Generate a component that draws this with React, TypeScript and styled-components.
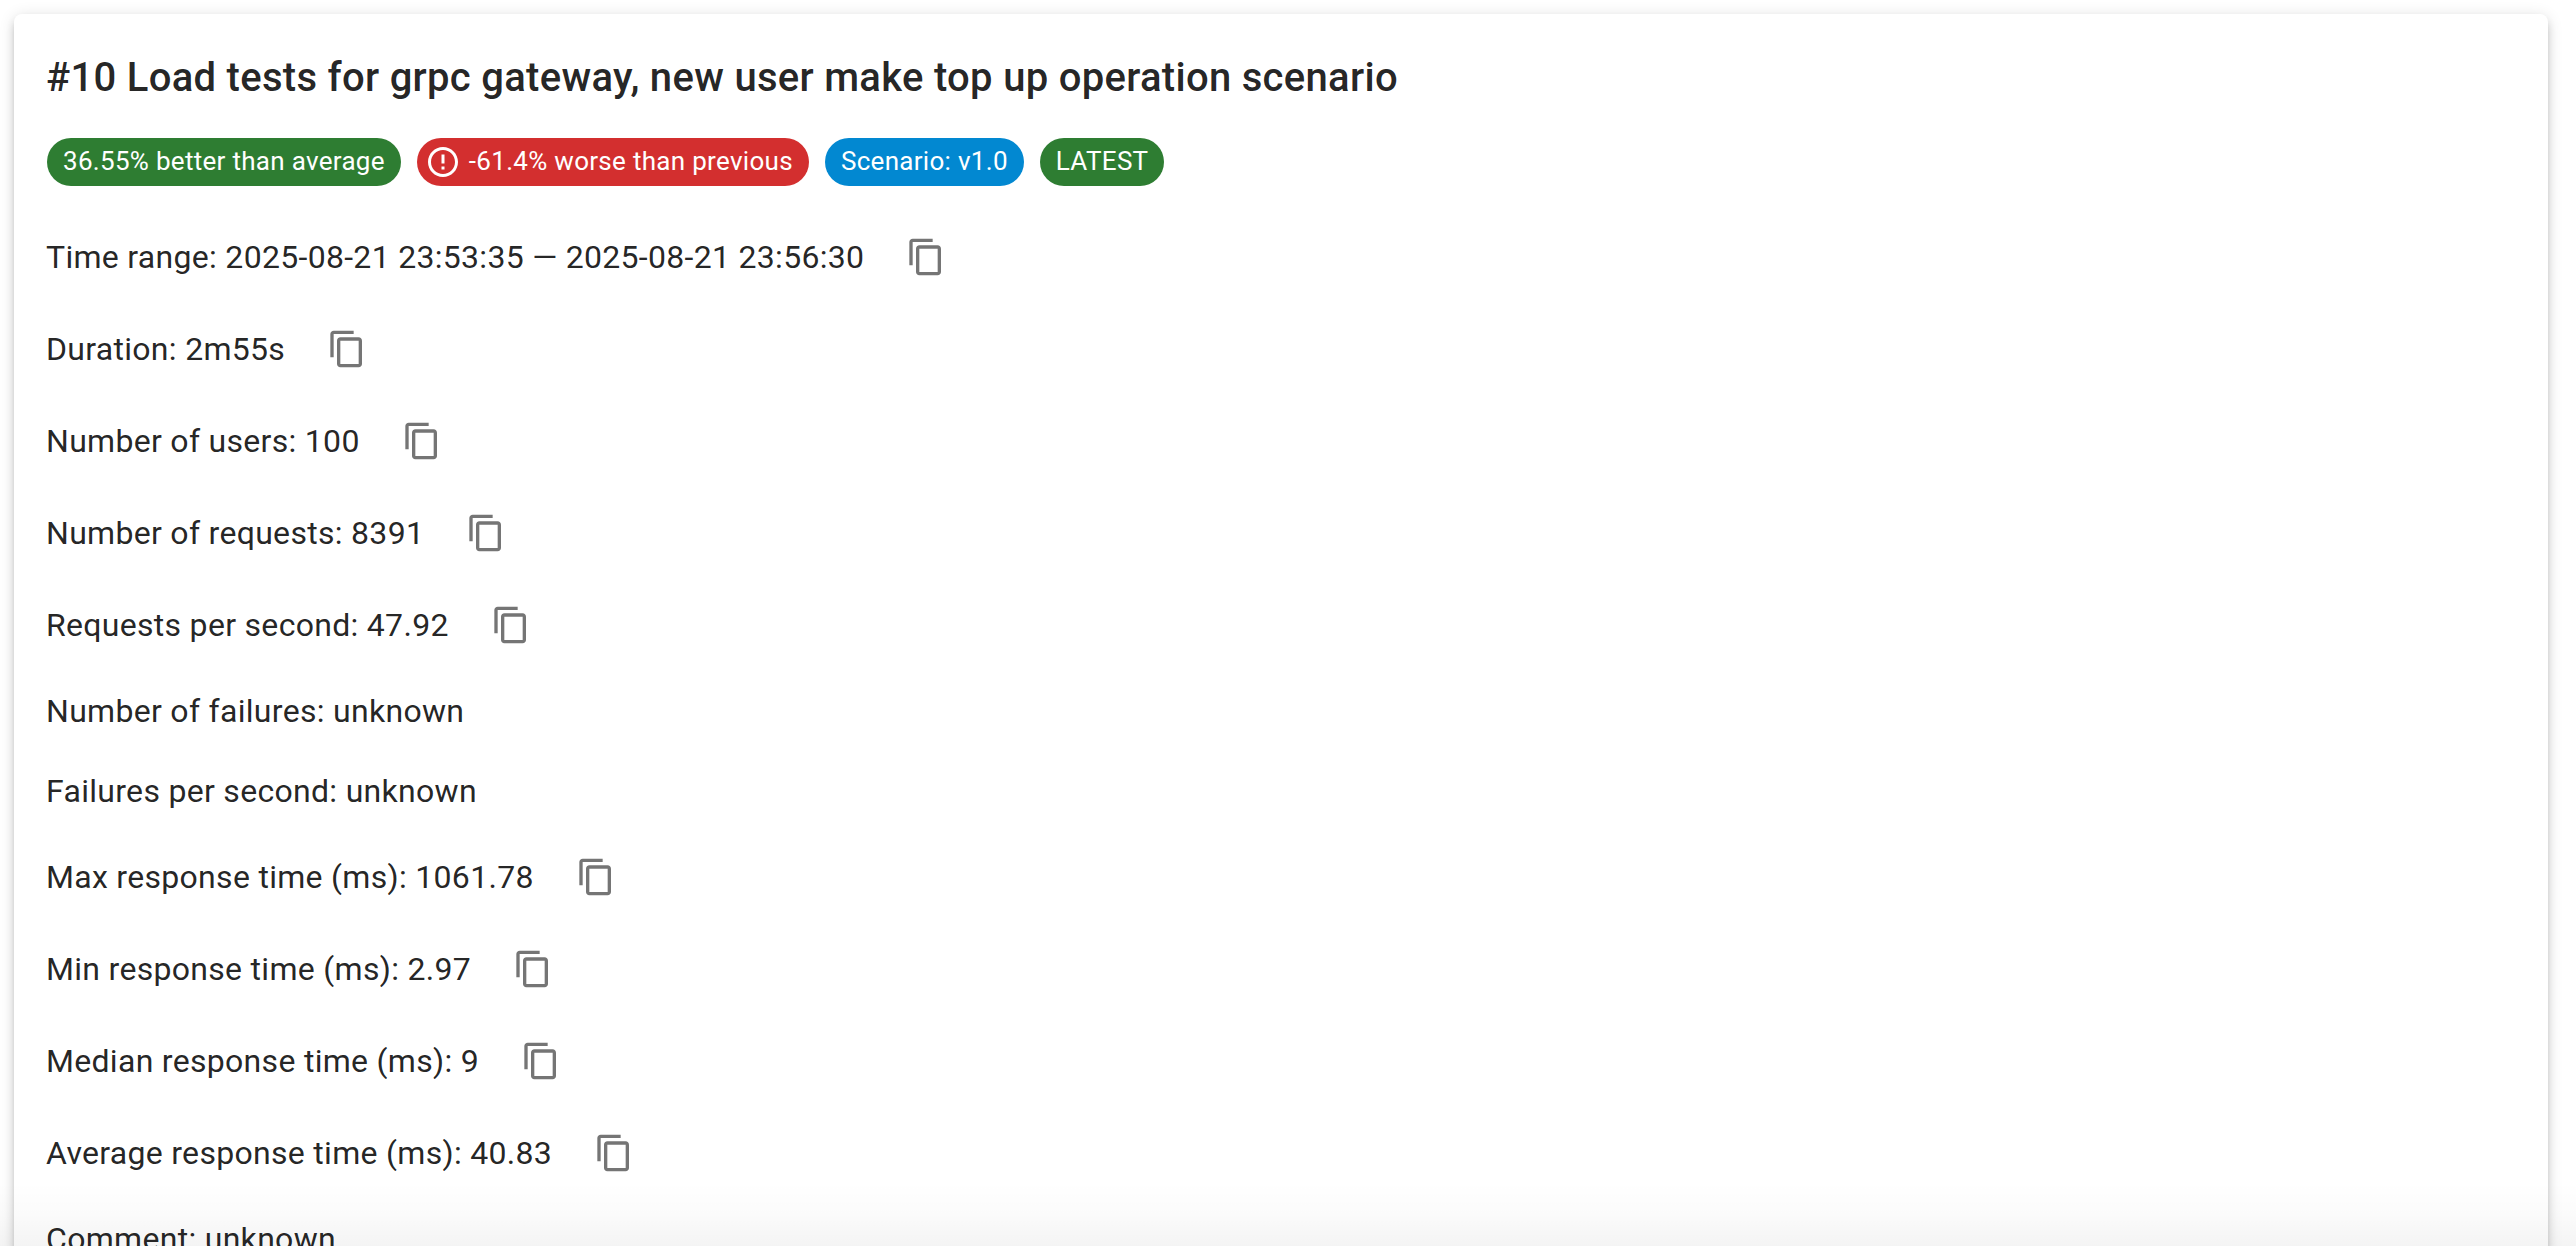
import React from "react";
import styled, { createGlobalStyle } from "styled-components";

const GlobalStyle = createGlobalStyle`
  *, *::before, *::after { box-sizing: border-box; }
  html, body { margin: 0; padding: 0; background: #fff; }
  body { font-family: Roboto, "Liberation Sans", sans-serif; color: rgba(0, 0, 0, 0.87); overflow: hidden; }
`;

const Page = styled.main`
  position: relative;
  height: 1246px;
  padding: 14px 28px 0 14px;
  overflow: hidden;
`;

const Card = styled.section`
  display: flex;
  flex-direction: column;
  min-height: 1400px;
  padding: 32px;
  border-radius: 8px;
  background: #fff;
  box-shadow: 0 6px 6px -4px rgba(0, 0, 0, 0.2), 0 6px 8px 0 rgba(0, 0, 0, 0.14), 0 2px 16px 0 rgba(0, 0, 0, 0.12);
`;

const Title = styled.h6`
  margin: 0;
  font-size: 40px;
  font-weight: 500;
  line-height: 64px;
  letter-spacing: 0.0075em;
`;

const Chips = styled.div`
  display: flex;
  gap: 16px;
  margin: 28px 0 41px 1px;
`;

const tones = { success: "#2e7d32", error: "#d32f2f", info: "#0288d1" };

const Chip = styled.div<{ $tone: keyof typeof tones }>`
  display: inline-flex;
  align-items: center;
  height: 48px;
  border-radius: 24px;
  background: ${(p) => tones[p.$tone]};
  color: #fff;
  font-size: 26px;
  line-height: 39px;
  letter-spacing: 0.3px;
  white-space: nowrap;
`;

const ChipLabel = styled.span`
  padding: 0 16px 2px;
`;

const ChipIcon = styled.svg`
  width: 36px;
  height: 36px;
  margin: 0 -8px 0 8px;
  fill: currentColor;
`;

const Details = styled.div`
  display: flex;
  flex-direction: column;
  gap: 32px;
`;

const Row = styled.div`
  display: flex;
  align-items: center;
  gap: 32px;
  font-size: 32px;
  line-height: 48px;
  letter-spacing: 0.00938em;
  white-space: nowrap;
`;

const CopyButton = styled.button`
  display: inline-flex;
  padding: 10px;
  border: 0;
  border-radius: 50%;
  background: transparent;
  color: rgba(0, 0, 0, 0.54);
  cursor: pointer;
`;

const CopyIcon = styled.svg`
  width: 40px;
  height: 40px;
  fill: currentColor;
`;

const BottomFade = styled.div`
  position: absolute;
  left: 0;
  right: 0;
  bottom: 0;
  height: 64px;
  background: linear-gradient(to bottom, rgba(0, 0, 0, 0), rgba(0, 0, 0, 0.015) 50%, rgba(0, 0, 0, 0.045));
  pointer-events: none;
`;

interface Detail {
  label: string;
  value?: string;
}

const details: Detail[] = [
  { label: "Time range", value: "2025-08-21 23:53:35 — 2025-08-21 23:56:30" },
  { label: "Duration", value: "2m55s" },
  { label: "Number of users", value: "100" },
  { label: "Number of requests", value: "8391" },
  { label: "Requests per second", value: "47.92" },
  { label: "Number of failures" },
  { label: "Failures per second" },
  { label: "Max response time (ms)", value: "1061.78" },
  { label: "Min response time (ms)", value: "2.97" },
  { label: "Median response time (ms)", value: "9" },
  { label: "Average response time (ms)", value: "40.83" },
  { label: "Comment" },
];

function DetailRow({ label, value }: Detail) {
  return (
    <Row>
      <span>{`${label}: ${value ?? "unknown"}`}</span>
      {value && (
        <CopyButton aria-label={`Copy ${label}`}>
          <CopyIcon viewBox="0 0 24 24">
            <path d="M16 1H4c-1.1 0-2 .9-2 2v14h2V3h12zm3 4H8c-1.1 0-2 .9-2 2v14c0 1.1.9 2 2 2h11c1.1 0 2-.9 2-2V7c0-1.1-.9-2-2-2m0 16H8V7h11z" />
          </CopyIcon>
        </CopyButton>
      )}
    </Row>
  );
}

export default function App() {
  return (
    <>
      <GlobalStyle />
      <Page>
        <Card>
          <Title>#10 Load tests for grpc gateway, new user make top up operation scenario</Title>
          <Chips>
            <Chip $tone="success">
              <ChipLabel>36.55% better than average</ChipLabel>
            </Chip>
            <Chip $tone="error">
              <ChipIcon viewBox="0 0 24 24">
                <path d="M11 15h2v2h-2zm0-8h2v6h-2zm.99-5C6.47 2 2 6.48 2 12s4.47 10 9.99 10C17.52 22 22 17.52 22 12S17.52 2 11.99 2M12 20c-4.42 0-8-3.58-8-8s3.58-8 8-8 8 3.58 8 8-3.58 8-8 8" />
              </ChipIcon>
              <ChipLabel>-61.4% worse than previous</ChipLabel>
            </Chip>
            <Chip $tone="info">
              <ChipLabel>Scenario: v1.0</ChipLabel>
            </Chip>
            <Chip $tone="success">
              <ChipLabel>LATEST</ChipLabel>
            </Chip>
          </Chips>
          <Details>
            {details.map((d) => (
              <DetailRow key={d.label} {...d} />
            ))}
          </Details>
        </Card>
        <BottomFade />
      </Page>
    </>
  );
}
